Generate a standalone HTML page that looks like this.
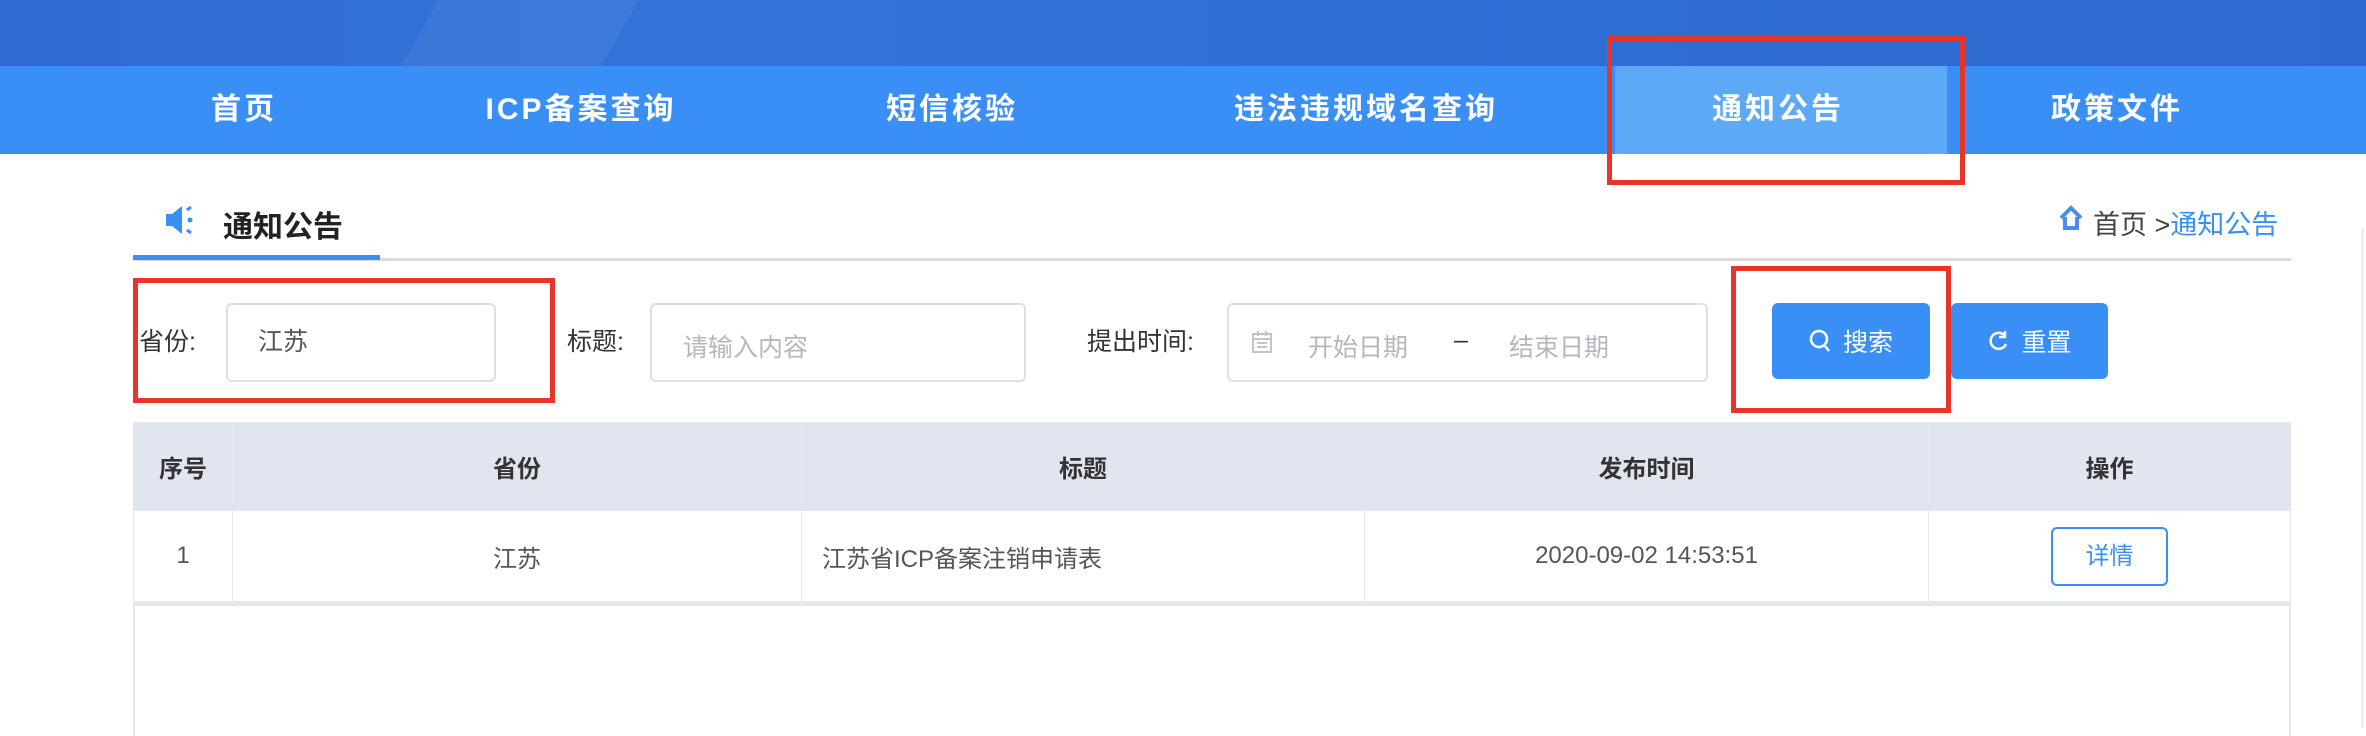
<!DOCTYPE html>
<html><head><meta charset="utf-8"><style>
*{margin:0;padding:0;box-sizing:border-box}
body{width:2366px;height:730px;overflow:hidden;background:#fff;font-family:"Liberation Sans","Noto Sans CJK SC",sans-serif;position:relative;color:#333}
.abs{position:absolute}
.banner{left:0;top:0;width:2366px;height:66px;background:linear-gradient(90deg,#2f6bd3 0%,#3374d8 30%,#2f6fd6 60%,#2e69cf 100%)}
.swoosh{left:420px;top:0;width:200px;height:66px;background:rgba(255,255,255,0.05);transform:skewX(-30deg)}
.nav{left:0;top:66px;width:2366px;height:88px;background:#3a8ff7}
.nav .it{position:absolute;top:0;height:88px;line-height:88px;color:#fff;font-size:30px;font-weight:bold;letter-spacing:3px;transform:translateX(-50%);white-space:nowrap}
.act{left:1615px;top:66px;width:332px;height:88px;background:#5ba9f7}
.red{border:5px solid #e8352a}
.lbl{font-size:25px;color:#333;line-height:1}
.inp{border:2px solid #dcdfe6;border-radius:6px;background:#fff}
.ph{color:#b4b7be;font-size:25px}
.btn{background:#3a8ff7;border-radius:6px;color:#fff;font-size:25px;display:flex;align-items:center;justify-content:center;gap:12px}
table{border-collapse:collapse;position:absolute;left:133px;top:422px;width:2158px}
td,th{border:1px solid #e4e7ed;text-align:center;font-size:24px}
th{background:#e1e5f0;height:88px;color:#333;font-weight:bold}
td{height:91px;color:#555}
</style></head><body>
<div class="abs banner"></div>
<div class="abs swoosh"></div>
<div class="abs nav">
<div class="it" style="left:244px">首页</div>
<div class="it" style="left:581px">ICP备案查询</div>
<div class="it" style="left:952px">短信核验</div>
<div class="it" style="left:1366px">违法违规域名查询</div>
<div class="it" style="left:2117px">政策文件</div>
</div>
<div class="abs act"></div>
<div class="abs" style="left:1778px;top:66px;height:88px;line-height:88px;color:#fff;font-size:30px;font-weight:bold;letter-spacing:3px;transform:translateX(-50%);white-space:nowrap">通知公告</div>
<div class="abs red" style="left:1607px;top:36px;width:358px;height:149px"></div>

<svg class="abs" style="left:164px;top:204px" width="34" height="32" viewBox="0 0 34 32"><path d="M2 10h6l10-8v28L8 22H2z" fill="#3a8ff7"/><path d="M23 6l4-3M23 26l4 3" stroke="#3a8ff7" stroke-width="3"/><circle cx="26" cy="16" r="2.5" fill="#3a8ff7"/></svg>
<div class="abs" style="left:223px;top:202px;font-size:30px;font-weight:bold;color:#222">通知公告</div>
<div class="abs" style="left:133px;top:258px;width:2158px;height:3px;background:#dcdcdc"></div>
<div class="abs" style="left:133px;top:255px;width:247px;height:5px;background:#3a8ff7"></div>
<svg class="abs" style="left:2058px;top:205px" width="26" height="26" viewBox="0 0 26 26"><path d="M3 13L13 3l10 10M7 12v11h12V12" fill="none" stroke="#4a8ee8" stroke-width="4"/></svg>
<div class="abs" style="left:2093px;top:203px;font-size:27px;color:#444">首页 &gt;<span style="color:#3a8ff7">通知公告</span></div>
<div class="abs" style="left:2361px;top:228px;width:3px;height:500px;background:#eee"></div>

<div class="abs lbl" style="left:139px;top:330px">省份:</div>
<div class="abs inp" style="left:226px;top:303px;width:270px;height:79px"></div>
<div class="abs lbl" style="left:258px;top:330px;color:#555">江苏</div>
<div class="abs red" style="left:133px;top:278px;width:422px;height:125px"></div>
<div class="abs lbl" style="left:567px;top:330px">标题:</div>
<div class="abs inp" style="left:650px;top:303px;width:376px;height:79px"></div>
<div class="abs ph" style="left:683px;top:328px">请输入内容</div>
<div class="abs lbl" style="left:1087px;top:330px">提出时间:</div>
<div class="abs inp" style="left:1227px;top:303px;width:481px;height:79px"></div>
<svg class="abs" style="left:1251px;top:330px" width="22" height="24" viewBox="0 0 22 24"><rect x="2" y="4" width="18" height="18" fill="none" stroke="#c0c4cc" stroke-width="2"/><path d="M2 9h18M7 1v5M15 1v5M6 13h10M6 17h10" stroke="#c0c4cc" stroke-width="2"/></svg>
<div class="abs ph" style="left:1308px;top:328px">开始日期</div>
<div class="abs" style="left:1454px;top:326px;font-size:25px;color:#333">–</div>
<div class="abs ph" style="left:1509px;top:328px">结束日期</div>
<div class="abs btn" style="left:1772px;top:303px;width:158px;height:76px"><svg width="22" height="24" viewBox="0 0 22 24"><circle cx="10" cy="10" r="8" fill="none" stroke="#fff" stroke-width="2.5"/><path d="M16 17l4 5" stroke="#fff" stroke-width="2.5"/></svg>搜索</div>
<div class="abs btn" style="left:1951px;top:303px;width:157px;height:76px"><svg width="22" height="22" viewBox="0 0 22 22"><path d="M18 6A8 8 0 1 0 19 14" fill="none" stroke="#fff" stroke-width="2.5"/><path d="M18 1v6h-6" fill="none" stroke="#fff" stroke-width="2.5"/></svg>重置</div>
<div class="abs red" style="left:1731px;top:266px;width:220px;height:147px"></div>

<table>
<tr><th style="width:99px">序号</th><th style="width:569px">省份</th><th style="width:563px">标题</th><th style="width:564px">发布时间</th><th>操作</th></tr>
<tr><td>1</td><td>江苏</td><td style="text-align:left;padding-left:20px">江苏省ICP备案注销申请表</td><td>2020-09-02 14:53:51</td><td><span style="display:inline-block;width:117px;height:59px;line-height:55px;border:2px solid #3a8ff7;border-radius:6px;color:#3a8ff7">详情</span></td></tr>
</table>
<div class="abs" style="left:133px;top:601px;width:2158px;height:5px;background:#e4e7ed"></div>
<div class="abs" style="left:133px;top:606px;width:2158px;height:130px;border-left:2px solid #e6e9f0;border-right:2px solid #e6e9f0"></div>
</body></html>
